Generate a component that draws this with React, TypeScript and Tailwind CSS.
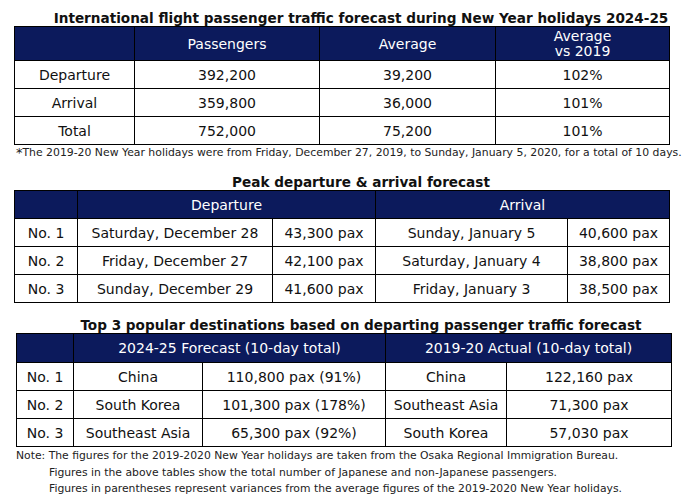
import React from "react";

const font = { fontFamily: '"DejaVu Sans", Verdana, sans-serif' };

const td = "border border-black text-center p-0 text-[14px] leading-none text-[#111]";
const th = "border border-black text-center p-0 text-[14px] leading-none font-normal text-white bg-[#0c1a5c]";
const title = "pl-[28px] text-center font-bold text-[13.6px] leading-[16px] text-[#111] whitespace-nowrap";

export default function App() {
  return (
    <div className="w-[694px] h-[499px] bg-white relative overflow-hidden" style={font}>
      {/* Title 1 */}
      <div className={`pt-[10px] ${title}`}>
        International flight passenger traffic forecast during New Year holidays 2024-25
      </div>
      <table className="ml-[14px] w-[655px] table-fixed border-collapse">
        <colgroup>
          <col className="w-[120px]" />
          <col className="w-[185px]" />
          <col className="w-[176px]" />
          <col className="w-[174px]" />
        </colgroup>
        <thead>
          <tr className="h-[34px]">
            <th className={th}></th>
            <th className={th}>Passengers</th>
            <th className={th}>Average</th>
            <th className={th}>
              <div className="leading-[15px]">Average<br />vs 2019</div>
            </th>
          </tr>
        </thead>
        <tbody>
          {[
            ["Departure", "392,200", "39,200", "102%"],
            ["Arrival", "359,800", "36,000", "101%"],
            ["Total", "752,000", "75,200", "101%"],
          ].map((r) => (
            <tr key={r[0]} className="h-[28px]">
              {r.map((c, i) => (
                <td key={i} className={td}>{c}</td>
              ))}
            </tr>
          ))}
        </tbody>
      </table>
      <div className="pl-[16px] h-[16px] text-[10.85px] leading-[14px] text-[#222] whitespace-nowrap">
        <span className="text-[13px] relative top-[1px]">*</span>The 2019-20 New Year holidays were from Friday, December 27, 2019, to Sunday, January 5, 2020, for a total of 10 days.
      </div>

      {/* Title 2 */}
      <div className={`pt-[13px] ${title}`}>
        Peak departure &amp; arrival forecast
      </div>
      <table className="ml-[14px] w-[655px] table-fixed border-collapse">
        <colgroup>
          <col className="w-[63px]" />
          <col className="w-[195px]" />
          <col className="w-[103px]" />
          <col className="w-[192px]" />
          <col className="w-[102px]" />
        </colgroup>
        <thead>
          <tr className="h-[28px]">
            <th className={th}></th>
            <th className={th} colSpan={2}>Departure</th>
            <th className={th} colSpan={2}>Arrival</th>
          </tr>
        </thead>
        <tbody>
          {[
            ["No. 1", "Saturday, December 28", "43,300 pax", "Sunday, January 5", "40,600 pax"],
            ["No. 2", "Friday, December 27", "42,100 pax", "Saturday, January 4", "38,800 pax"],
            ["No. 3", "Sunday, December 29", "41,600 pax", "Friday, January 3", "38,500 pax"],
          ].map((r) => (
            <tr key={r[0]} className="h-[28px]">
              {r.map((c, i) => (
                <td key={i} className={td}>{c}</td>
              ))}
            </tr>
          ))}
        </tbody>
      </table>

      {/* Title 3 */}
      <div className={`pt-[14px] ${title}`}>
        Top 3 popular destinations based on departing passenger traffic forecast
      </div>
      <table className="ml-[16px] w-[655px] table-fixed border-collapse">
        <colgroup>
          <col className="w-[57px]" />
          <col className="w-[129px]" />
          <col className="w-[183px]" />
          <col className="w-[121px]" />
          <col className="w-[165px]" />
        </colgroup>
        <thead>
          <tr className="h-[29px]">
            <th className={th}></th>
            <th className={th} colSpan={2}>2024-25 Forecast (10-day total)</th>
            <th className={th} colSpan={2}>2019-20 Actual (10-day total)</th>
          </tr>
        </thead>
        <tbody>
          {[
            ["No. 1", "China", "110,800 pax (91%)", "China", "122,160 pax"],
            ["No. 2", "South Korea", "101,300 pax (178%)", "Southeast Asia", "71,300 pax"],
            ["No. 3", "Southeast Asia", "65,300 pax (92%)", "South Korea", "57,030 pax"],
          ].map((r) => (
            <tr key={r[0]} className="h-[28px]">
              {r.map((c, i) => (
                <td key={i} className={td}>{c}</td>
              ))}
            </tr>
          ))}
        </tbody>
      </table>
      <div className="pl-[16px] pt-[1px] text-[10.8px] leading-[16.5px] text-[#222] whitespace-nowrap">
        <div>Note: The figures for the 2019-2020 New Year holidays are taken from the Osaka Regional Immigration Bureau.</div>
        <div className="pl-[33px]">Figures in the above tables show the total number of Japanese and non-Japanese passengers.</div>
        <div className="pl-[33px]">Figures in parentheses represent variances from the average figures of the 2019-2020 New Year holidays.</div>
      </div>
    </div>
  );
}
